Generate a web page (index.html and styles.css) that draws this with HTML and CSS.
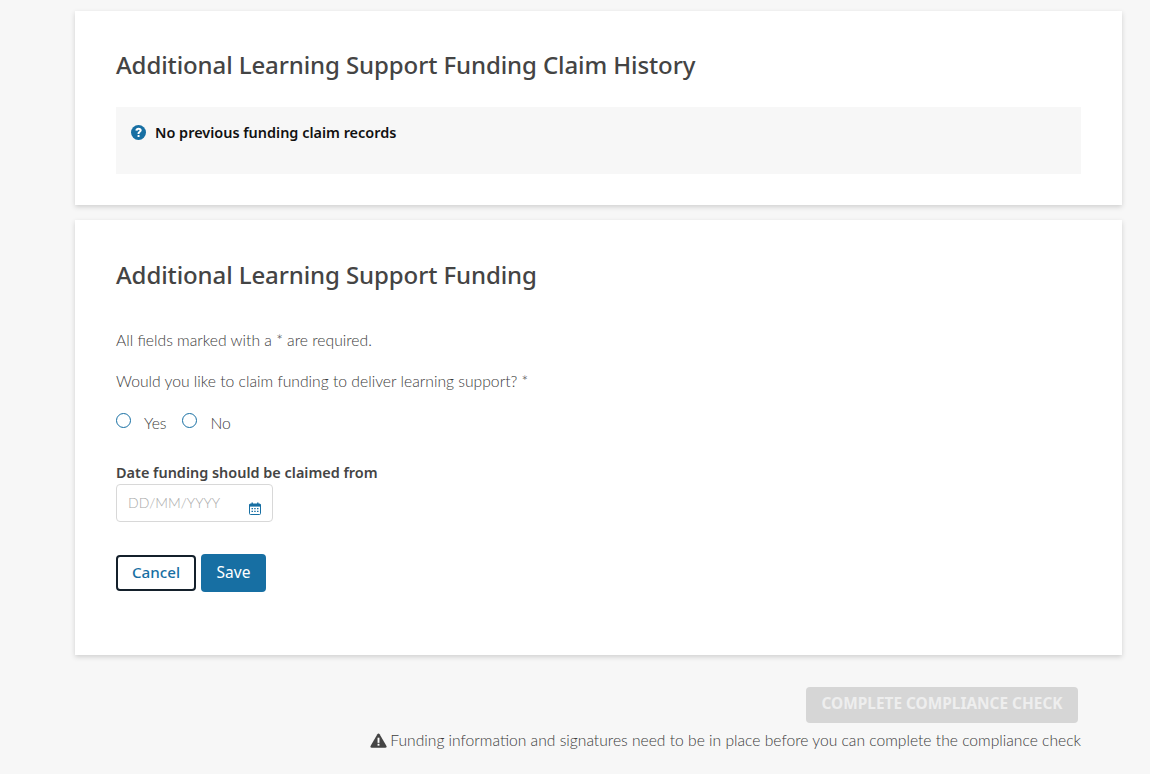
FILE: index.html
```html
<!DOCTYPE html>
<html lang="en">
<head>
<meta charset="utf-8">
<title>Additional Learning Support Funding</title>
<link rel="stylesheet" href="styles.css">
</head>
<body>
<main class="page">
  <section class="card card-history">
    <h2 class="title">Additional Learning Support Funding Claim History</h2>
    <div class="notice">
      <svg class="notice-icon" viewBox="0 0 16 16" width="15" height="15" aria-hidden="true">
        <circle cx="8" cy="8" r="8" fill="#176fa3"/>
        <path d="M4.700 5.900C4.800 4 6.200 3 8.100 3c1.900 0 3.300 1.100 3.300 2.700 0 1.200-.7 1.800-1.500 2.300-.6.400-.8.600-.8 1.200v.3H7V8.900c0-1 .4-1.600 1.200-2.100.6-.4.900-.6.900-1 0-.5-.4-.8-1-.8s-1 .4-1.100 1z" fill="#fff"/>
        <rect x="7" y="10.600" width="2.100" height="2.100" rx=".3" fill="#fff"/>
      </svg>
      <span class="notice-text">No previous funding claim records</span>
    </div>
  </section>

  <section class="card card-form">
    <h2 class="title">Additional Learning Support Funding</h2>
    <p class="text required-note">All fields marked with a * are required.</p>
    <p class="text question">Would you like to claim funding to deliver learning support? *</p>
    <div class="radios">
      <label class="radio"><span class="radio-dot"></span><span class="radio-label">Yes</span></label>
      <label class="radio"><span class="radio-dot"></span><span class="radio-label">No</span></label>
    </div>
    <div class="field-label">Date funding should be claimed from</div>
    <div class="date-input">
      <span class="placeholder">DD/MM/YYYY</span>
      <svg class="cal-icon" viewBox="0 0 12 13" width="12" height="13" aria-hidden="true">
        <path d="M1.500 2h9a1 1 0 0 1 1 1v8.500a1 1 0 0 1-1 1h-9a1 1 0 0 1-1-1V3a1 1 0 0 1 1-1z" fill="none" stroke="#176fa3"/>
        <rect x="0.500" y="2" width="11" height="2.600" fill="#176fa3"/>
        <rect x="2.500" y="0.500" width="1.400" height="2.500" fill="#176fa3"/>
        <rect x="8.100" y="0.500" width="1.400" height="2.500" fill="#176fa3"/>
        <path d="M2.500 6H4v1.300H2.500zM5.200 6h1.500v1.300H5.200zM8 6h1.500v1.300H8zM2.500 8.800H4v1.300H2.500zM5.200 8.800h1.500v1.300H5.200zM8 8.800h1.500v1.300H8z" fill="#176fa3"/>
      </svg>
    </div>
    <div class="actions">
      <button class="btn btn-cancel" type="button">Cancel</button>
      <button class="btn btn-save" type="button">Save</button>
    </div>
  </section>

  <div class="footer">
    <button class="btn-complete" type="button" disabled>COMPLETE COMPLIANCE CHECK</button>
    <p class="warning">
      <svg class="warn-icon" viewBox="0 0 18 16" width="17" height="15" aria-hidden="true">
        <path d="M9 .5c.5 0 .9.300 1.200.700l7.300 12.600c.5.900-.1 1.900-1.200 1.900H1.700C.6 15.700 0 14.700.5 13.800L7.800 1.200C8.100.8 8.500.5 9 .5z" fill="#444"/>
        <rect x="8" y="5" width="2" height="5.500" fill="#fff"/>
        <rect x="8" y="11.500" width="2" height="2" fill="#fff"/>
      </svg>
      <span>Funding information and signatures need to be in place before you can complete the compliance check</span>
    </p>
  </div>
</main>
</body>
</html>
```

FILE: styles.css
```css
* { box-sizing: border-box; }
html, body { margin: 0; padding: 0; }
body {
  background: #f7f7f7;
  font-family: "Noto Sans", "Open Sans", sans-serif;
  color: #444;
  height: 774px;
  overflow: hidden;
}
.page { padding: 11px 28px 0 75px; }
.card {
  background: #fff;
  box-shadow: 0 2px 5px rgba(0, 0, 0, .16);
  padding: 36px 41px 0;
}
.card-history { height: 194px; margin-bottom: 15px; }
.card-form { height: 435px; padding-top: 37px; }
.title {
  margin: 0;
  font-size: 24px;
  line-height: 36px;
  font-weight: 500;
  letter-spacing: -0.1px;
  color: #444;
}
.notice {
  margin-top: 24px;
  height: 67px;
  background: #f7f7f7;
  padding: 18px 15px 0;
  display: flex;
  align-items: flex-start;
  gap: 9px;
  color: #111;
  font-size: 14.450px;
  line-height: 16px;
  font-weight: 600;
}
.notice-icon { flex: none; }
.text { margin: 0; font-family: "Lato", sans-serif; font-weight: 300; font-size: 15.700px; line-height: 20px; color: #3c3c3c; }
.required-note { margin-top: 37px; }
.question { margin-top: 21px; }
.radios { display: flex; margin-top: 20px; gap: 15px; height: 28px; }
.radio { display: flex; align-items: flex-start; }
.radio-dot {
  width: 15px;
  height: 15px;
  border: 1.500px solid #176fa3;
  border-radius: 50%;
  background: #fff;
  margin-top: 2px;
  flex: none;
}
.radio-label {
  margin-left: 13px;
  margin-top: 2px;
  font-family: "Lato", sans-serif;
  font-weight: 300;
  font-size: 15.700px;
  line-height: 20px;
  color: #3c3c3c;
}
.radio + .radio .radio-label { margin-left: 14px; }
.field-label { margin-top: 24px; font-size: 14.450px; line-height: 20px; font-weight: 600; color: #444; }
.date-input {
  position: relative;
  width: 157px;
  height: 38px;
  margin-top: 1px;
  border: 1px solid #d8d8d8;
  border-radius: 4px;
  background: #fff;
  padding: 6px 11px 0;
}
.placeholder { font-family: "Lato", sans-serif; font-weight: 300; font-size: 14px; line-height: 20px; color: #a9a9a9; }
.cal-icon { position: absolute; right: 11px; top: 17px; }
.actions { display: flex; gap: 5px; margin-top: 32px; align-items: flex-start; }
.btn {
  font-family: "Noto Sans", sans-serif;
  border-radius: 4px;
  cursor: pointer;
}
.btn-cancel {
  width: 80px;
  height: 36px;
  margin-top: 1px;
  background: #fff;
  border: 2px solid #14202b;
  color: #176fa3;
  font-size: 15.200px;
  font-weight: 500;
  padding: 0 0 3px;
}
.btn-save {
  width: 65px;
  height: 38px;
  background: #176fa3;
  border: 0;
  color: #fff;
  font-size: 15.500px;
  padding: 0 0 3px;
}
.footer { display: flex; flex-direction: column; align-items: flex-end; padding-right: 41px; }
.btn-complete {
  width: 272px;
  height: 36px;
  margin: 32px 3px 0 0;
  background: #d6d6d6;
  border: 0;
  border-radius: 4px;
  color: #eee;
  font-family: "Noto Sans", sans-serif;
  font-size: 15.400px;
  font-weight: 700;
  padding: 0 0 4px;
}
.warning {
  margin: 8px 0 0;
  display: flex;
  align-items: center;
  gap: 3px;
  font-family: "Lato", sans-serif;
  font-weight: 300;
  font-size: 15.650px;
  line-height: 18px;
  color: #3c3c3c;
}
.warn-icon { flex: none; margin-top: 1px; }
```
